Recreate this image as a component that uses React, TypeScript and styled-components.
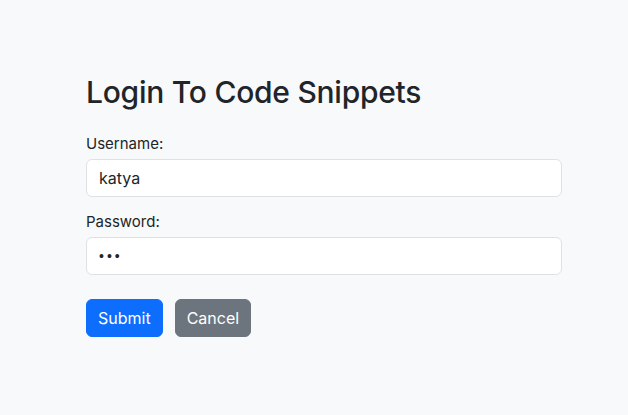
import React from "react";
import styled, { createGlobalStyle } from "styled-components";

const Global = createGlobalStyle`
  html, body { margin: 0; padding: 0; background: #f8f9fa; }
  body {
    font-family: Inter, "Noto Sans", "Liberation Sans", sans-serif;
    color: #212529;
    font-size: 16px;
    line-height: 1.5;
  }
  * { box-sizing: border-box; }
`;

const Page = styled.div`
  width: 628px;
  height: 415px;
  background: #f8f9fa;
  padding: 73px 66px 0 86px;
`;

const Title = styled.h2`
  margin: 0;
  font-size: 30px;
  font-weight: 500;
  line-height: 38px;
  letter-spacing: -0.25px;
`;

const Form = styled.form`
  display: flex;
  flex-direction: column;
  margin-top: 21px;
`;

const Field = styled.div<{ $gap: number }>`
  display: flex;
  flex-direction: column;
  margin-bottom: ${(p) => p.$gap}px;
`;

const Label = styled.label`
  display: block;
  font-size: 15px;
  line-height: 24px;
  margin-bottom: 3px;
`;

const Input = styled.input`
  display: block;
  width: 476px;
  height: 38px;
  padding: 6px 12px;
  font-family: inherit;
  font-size: 16px;
  color: #212529;
  background: #fff;
  border: 1px solid #dee2e6;
  border-radius: 6px;
  outline: none;

  &[type="password"] {
    font-family: "Liberation Sans", sans-serif;
    font-size: 14px;
    letter-spacing: 3px;
  }
`;

const Actions = styled.div`
  display: flex;
  gap: 12px;
`;

const Button = styled.button<{ $variant: "primary" | "secondary" }>`
  height: 38px;
  padding: 0 11px;
  font-family: inherit;
  font-size: 16px;
  line-height: 24px;
  color: #fff;
  border: 1px solid ${(p) => (p.$variant === "primary" ? "#0d6efd" : "#6c757d")};
  background: ${(p) => (p.$variant === "primary" ? "#0d6efd" : "#6c757d")};
  border-radius: 6px;
  cursor: pointer;
`;

export default function App() {
  return (
    <>
      <Global />
      <Page>
        <Title>Login To Code Snippets</Title>
        <Form onSubmit={(e) => e.preventDefault()}>
          <Field $gap={13}>
            <Label htmlFor="username">Username:</Label>
            <Input id="username" type="text" defaultValue="katya" />
          </Field>
          <Field $gap={24}>
            <Label htmlFor="password">Password:</Label>
            <Input id="password" type="password" defaultValue="abc" />
          </Field>
          <Actions>
            <Button type="submit" $variant="primary">Submit</Button>
            <Button type="button" $variant="secondary">Cancel</Button>
          </Actions>
        </Form>
      </Page>
    </>
  );
}
